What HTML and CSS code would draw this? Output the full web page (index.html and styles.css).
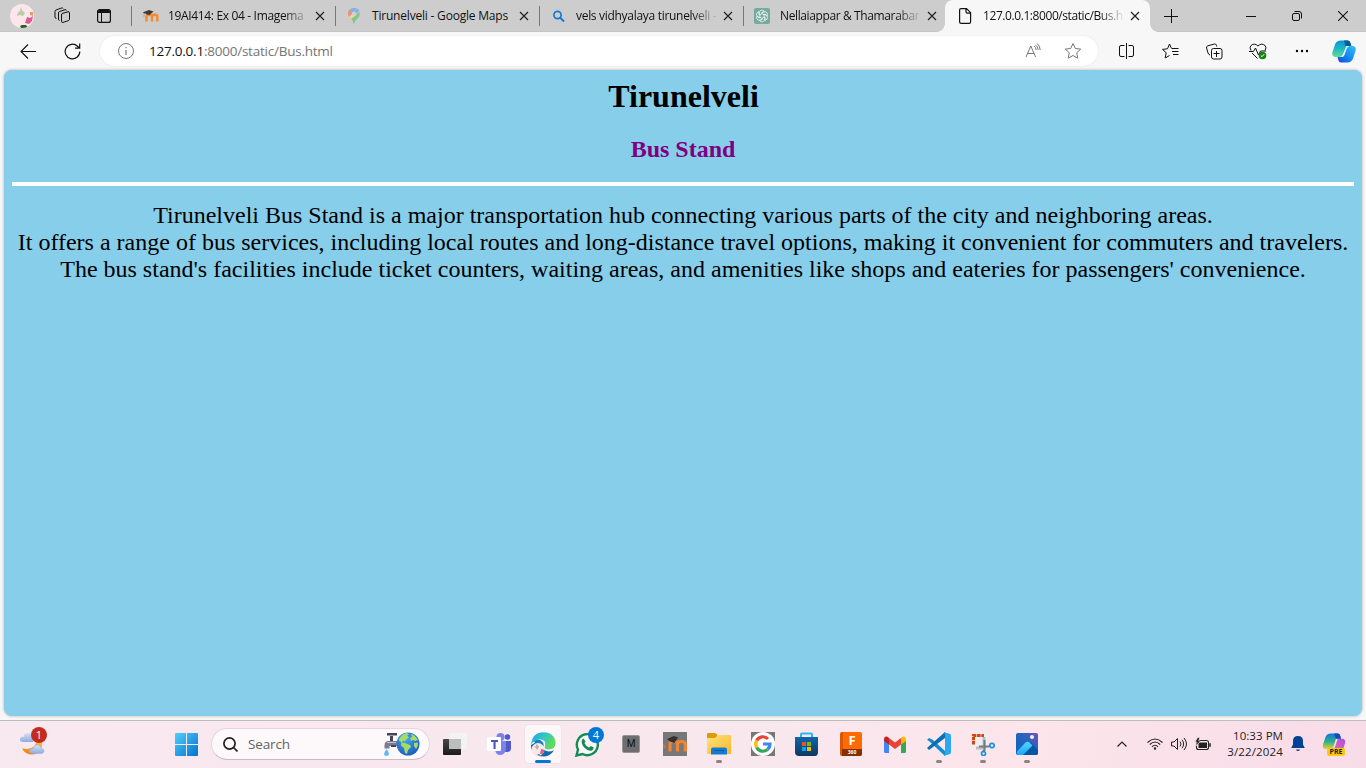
FILE: index.html
```html
<!DOCTYPE html>
<html lang="en">
<head>
<meta charset="utf-8">
<title>Tirunelveli Bus Stand</title>
<link rel="stylesheet" href="styles.css">
</head>
<body>
<svg class="defs" width="0" height="0">
  <defs>
    <symbol id="x" viewBox="0 0 10 10"><path d="M1 1l8 8M9 1L1 9" fill="none" stroke="#222" stroke-width="1.2"/></symbol>
    <linearGradient id="cop1" x1="0" y1="0" x2="0" y2="1"><stop offset="0" stop-color="#0a93d8"/><stop offset=".5" stop-color="#20b8c8"/><stop offset="1" stop-color="#62dc90"/></linearGradient>
    <linearGradient id="cop2" x1="1" y1="0" x2="0" y2="1"><stop offset="0" stop-color="#2fc4f4"/><stop offset=".5" stop-color="#178cf4"/><stop offset="1" stop-color="#1346d8"/></linearGradient>
    <linearGradient id="win" gradientUnits="userSpaceOnUse" x1="0" y1="0" x2="23" y2="23"><stop offset="0" stop-color="#4fd0fb"/><stop offset="1" stop-color="#0470cf"/></linearGradient>
    <linearGradient id="cloud" x1="0" y1="0" x2="0" y2="1"><stop offset="0" stop-color="#d3e1f8"/><stop offset="1" stop-color="#8eabe0"/></linearGradient>
    <linearGradient id="moon" x1="0" y1="1" x2="1" y2="0"><stop offset="0" stop-color="#ec7d16"/><stop offset="1" stop-color="#fbc430"/></linearGradient>
    <linearGradient id="dark" x1="0" y1="0" x2="0" y2="1"><stop offset="0" stop-color="#484848"/><stop offset="1" stop-color="#1b1b1b"/></linearGradient>
    <linearGradient id="edge1" x1="0" y1="0" x2="1" y2=".5"><stop offset="0" stop-color="#239fd8"/><stop offset=".5" stop-color="#2fc5cc"/><stop offset="1" stop-color="#65dc58"/></linearGradient>
    <linearGradient id="folder" x1="0" y1="0" x2="1" y2="1"><stop offset="0" stop-color="#ffe27c"/><stop offset="1" stop-color="#fbb829"/></linearGradient>
    <linearGradient id="photo" x1="0" y1="1" x2="1" y2="0"><stop offset="0" stop-color="#0b63c0"/><stop offset=".6" stop-color="#2964bd"/><stop offset="1" stop-color="#7a4bb8"/></linearGradient>
    <linearGradient id="hill" x1="0" y1="0" x2="0" y2="1"><stop offset="0" stop-color="#4fd8ff"/><stop offset="1" stop-color="#1da7f0"/></linearGradient>
    <linearGradient id="store" x1="0" y1="0" x2="0" y2="1"><stop offset="0" stop-color="#0c67ad"/><stop offset="1" stop-color="#12375f"/></linearGradient>
    <linearGradient id="pre1" x1="0" y1="0" x2="0" y2="1"><stop offset="0" stop-color="#1576d8"/><stop offset=".5" stop-color="#28ae90"/><stop offset="1" stop-color="#e8d52a"/></linearGradient>
    <linearGradient id="pre2" x1="1" y1="0" x2="0" y2="1"><stop offset="0" stop-color="#a34fe8"/><stop offset="1" stop-color="#f6718d"/></linearGradient>
    <radialGradient id="globe" cx=".4" cy=".3" r=".8"><stop offset="0" stop-color="#49a5ef"/><stop offset="1" stop-color="#1555b5"/></radialGradient>
    <clipPath id="round"><circle cx="12" cy="12" r="12"/></clipPath>
    <clipPath id="mini"><circle cx="7" cy="17.500" r="6.500"/></clipPath>
  </defs>
</svg>

<header class="tabstrip">
  <div class="cell profile">
    <svg width="24" height="24" viewBox="0 0 24 24"><g clip-path="url(#round)"><path d="M0 0h24v24H0z" fill="#fbe6ea"/><path d="M11 3l1 3 3 3-2 3-3-1-3 1 1-4 2-1z" fill="#bccab0"/><path d="M17 13l3 1 3-2-1 5-3 3-4-1 1-3z" fill="#dd5c8d"/><path d="M20 8l3 0 0 4-3-1z" fill="#e79a6a"/><path d="M10 22l2-1 4 0 2 3h-7z" fill="#23622b"/></g></svg>
  </div>
  <div class="cell workspaces">
    <svg width="17" height="17" viewBox="0 0 17 17" fill="none" stroke="#111"><path d="M8 6.500l6-1.700q1.500-.3 1.500 1v6.500q0 1-1 1.300l-5.500 1.800q-1.500.3-1.500-1V8q0-1.200.5-1.500z"/><path d="M5.500 13.500q-1 0-1-1.500V6q0-1.200 1-1.500l5.500-1.800q1.300-.2 1.600.8M2.500 11.500Q1 11.500 1 10V4.500Q1 3.300 2 3L7.500 1Q9 .800 9.300 1.500"/></svg>
  </div>
  <div class="cell tabactions">
    <svg width="14" height="14" viewBox="0 0 14 14"><rect x=".6" y=".6" width="12.800" height="12.800" rx="2" fill="none" stroke="#111" stroke-width="1.200"/><path d="M1 2.500Q1 1 2.500 1h9Q13 1 13 2.500V4H1z" fill="#111"/><path d="M4.500 4v9" stroke="#111"/></svg>
  </div>
  <div class="tab">
    <svg width="16" height="16" viewBox="0 0 16 16"><path d="M3.500 13.500V8.600q0-1.800 2.800-1.800t2.700 1.800v4.900m0-4.900q0-1.800 2.800-1.800t2.500 1.800v4.900" fill="none" stroke="#f98a2c" stroke-width="2.400"/><path d="M0 4.300L6 2l4.500 1.500L6.500 7 3.500 6.500 3 5.500l-2 .1z" fill="#3f3b3a"/><path d="M1 5v4" stroke="#a88" stroke-width=".6"/></svg>
    <span class="label l1">19AI414: Ex 04 - Imagema</span><svg class="close"><use href="#x"/></svg>
  </div>
  <div class="tab">
    <svg class="pin" width="16" height="16" viewBox="0 0 16 16"><path d="M2 6Q2 0 8-.1L10 8 8 16Q7.500 12 4.500 10 2 8 2 6z" fill="#83c99b"/><path d="M3.500 2L8 0q4 0 5.500 3L5 9z" fill="#8eaee8"/><path d="M3.500 2L8 6 5 9Q2 8 2 5.500q0-2 1.500-3.500z" fill="#ed8d83"/><path d="M13.700 4Q14.500 8 11 11q-2.500 2-3 5-1-4-3.500-6.500z" fill="#7fc798"/><path d="M3 9l5-5 2.500 3L5 11z" fill="#f8d678"/><circle cx="8" cy="5.600" r="2.200" fill="#d0d0d0"/></svg>
    <span class="label l2">Tirunelveli - Google Maps</span><svg class="close"><use href="#x"/></svg>
  </div>
  <div class="tab">
    <svg width="16" height="16" viewBox="0 0 16 16" fill="none" stroke="#1a79d2"><circle cx="6.500" cy="7" r="3.600" stroke-width="1.700"/><path d="M9 9.500l4 4" stroke-width="2"/></svg>
    <span class="label l3">vels vidhyalaya tirunelveli -</span><svg class="close"><use href="#x"/></svg>
  </div>
  <div class="tab">
    <svg class="gpt" width="16" height="16" viewBox="0 0 16 16"><rect width="16" height="16" rx="2" fill="#75aa9c"/><g fill="none" stroke="#f4faf8" stroke-width=".75"><path id="petal" d="M8 5.600L5.300 7.100V4.300Q6 2.100 8 2.100q1.500 0 2.300 1.200L7.700 4.800"/><use href="#petal" transform="rotate(60 8 8)"/><use href="#petal" transform="rotate(120 8 8)"/><use href="#petal" transform="rotate(180 8 8)"/><use href="#petal" transform="rotate(240 8 8)"/><use href="#petal" transform="rotate(300 8 8)"/></g></svg>
    <span class="label l4">Nellaiappar &amp; Thamarabar</span><svg class="close"><use href="#x"/></svg>
  </div>
  <div class="tab active">
    <svg width="16" height="16" viewBox="0 0 16 16" fill="none" stroke="#111" stroke-width="1.200"><path d="M2 .6h5.500L11.600 4.700v9.100q0 1.600-1.500 1.600H2.100Q.6 15.400.6 13.800V2Q.6.600 2 .6zM7 .6v3.200q0 1.400 1.400 1.400h3.200"/></svg>
    <span class="label l5">127.0.0.1:8000/static/Bus.h</span><svg class="close"><use href="#x"/></svg>
  </div>
  <div class="cell newtab"><svg width="14" height="14" viewBox="0 0 14 14"><path d="M7.500 0v14M0 7.500h14" stroke="#111"/></svg></div>
  <div class="caption">
    <div><svg width="10" height="10"><path d="M0 5.500h10" stroke="#111"/></svg></div>
    <div><svg width="10" height="10" viewBox="0 0 10 10" fill="none" stroke="#111"><rect x=".5" y="2.500" width="7" height="7" rx="1.500"/><path d="M2.500.5H7Q9.500.5 9.500 3v4.500"/></svg></div>
    <div><svg width="10" height="10"><path d="M0 0l10 10M10 0L0 10" stroke="#111" stroke-width="1.100"/></svg></div>
  </div>
</header>

<nav class="toolbar">
  <div class="tool back"><svg width="17" height="15" viewBox="0 0 17 15" fill="none" stroke="#111" stroke-width="1.100"><path d="M16 7.500H1M8 .5l-7 7 7 7"/></svg></div>
  <div class="tool reload"><svg width="17" height="17" viewBox="0 0 17 17" fill="none" stroke="#111" stroke-width="1.200"><path d="M15.800 8.500A7.300 7.300 0 1 1 13.500 3.200L15.500 5M15.700.500V5.200H11"/></svg></div>
  <div class="address">
    <svg width="16" height="16" viewBox="0 0 16 16" fill="none" stroke="#777"><circle cx="8" cy="8" r="7.500"/><path d="M8 7v5M8 4v1.300" stroke-width="1.200"/></svg>
    <span class="url"><b>127.0.0.1</b>:8000/static/Bus.html</span>
    <svg class="read" width="17" height="16" viewBox="0 0 17 16" fill="none" stroke="#777"><path d="M1 14L5.800 3 10.600 14M2.500 10.500h6.600M9 3q2 1.300 2.200 4M10.500 2q2.500 1.500 2.700 5M12 .5q3 2 3.200 6.500"/></svg>
    <svg width="18" height="18" viewBox="0 0 18 18" fill="none" stroke="#777" stroke-linejoin="round"><path d="M9 1.500l2.300 5 5.400.6-4 3.700 1.100 5.400L9 13.500l-4.800 2.700 1.100-5.400-4-3.700 5.400-.6z"/></svg>
  </div>
  <div class="tool split"><svg width="15" height="16" viewBox="0 0 15 16" fill="none" stroke="#111"><path d="M5.500 2.500H2Q.5 2.500.5 4v8q0 1.500 1.500 1.500h3.500M9.500 2.500H13q1.500 0 1.500 1.500v8q0 1.500-1.500 1.500H9.500M7.500 0v16"/></svg></div>
  <div class="tool"><svg width="17" height="16" viewBox="0 0 17 16" fill="none" stroke="#111" stroke-linejoin="round"><path d="M9.500 5.500L7.500 1 5.500 5.800l-5 .6 3.700 3.300-1 5.300L7.500 12.500M10 5.500h6.500M10 8.500h6.500M11 11.500h5.500"/></svg></div>
  <div class="tool"><svg width="17" height="17" viewBox="0 0 17 17" fill="none" stroke="#111"><rect x="5.500" y="5.500" width="10.500" height="10.500" rx="2"/><path d="M10.500 8v6M7.500 10.500h6M4 12q-1.500-.5-2-2L.6 5Q.2 3.300 1.800 2.800L8.500 1q1.500-.3 2 1.300l.3 1.200"/></svg></div>
  <div class="tool"><svg width="18" height="17" viewBox="0 0 18 17" fill="none" stroke="#111"><path d="M2 7.500Q0 4.500 2 2.500 5.500-.5 9 3q3.500-3.500 7-.5 2 2 0 5M3 10l5.500 5.500M0 8.500h4.500L6.500 5l3 7 2-4h5.500"/><circle cx="13.500" cy="12.500" r="3.800" fill="#138313" stroke="none"/><path d="M11.800 12.500l1.200 1.200 2.200-2.500" stroke="#fff"/></svg></div>
  <div class="tool"><svg width="14" height="4"><circle cx="2" cy="2" r="1.200"/><circle cx="7" cy="2" r="1.200"/><circle cx="12" cy="2" r="1.200"/></svg></div>
  <div class="tool copilot"><svg width="24" height="23" viewBox="0 0 24 23"><path d="M9 .5h6.500Q17.800.5 18.500 3l.8 3H14.500L11 14.500q-1 2.500-3 2.500H3Q-.5 16.500.5 12L3.200 4Q4.500.5 9 .5z" fill="url(#cop1)"/><path d="M12 .5h4q2 0 2.500 2.500l.8 3h-6z" fill="#0a5c99"/><path d="M18 6h2.500Q24.800 6.500 23.500 11L21 18.500Q19.500 22.500 15.500 22.500H9Q7 22.500 6.300 20L5.500 17H8.500q2.500 0 3.500-3l2-5.500Q15 6 18 6z" fill="url(#cop2)"/><path d="M14.500 6h3q-2 .2-2.700 2.500L12.500 15q-.8 2-2.500 2H8.500q2-.5 2.800-3z" fill="#eefafd"/></svg></div>
</nav>

<main class="page">
  <h1>Tirunelveli</h1>
  <h2>Bus Stand</h2>
  <hr>
  <p>Tirunelveli Bus Stand is a major transportation hub connecting various parts of the city and neighboring areas.<br>It offers a range of bus services, including local routes and long-distance travel options, making it convenient for commuters and travelers.<br>The bus stand's facilities include ticket counters, waiting areas, and amenities like shops and eateries for passengers' convenience.</p>
</main>

<footer class="taskbar">
  <div class="weather">
    <svg width="26" height="24" viewBox="0 0 26 24"><path d="M2 16.500q8 1.500 12-2l4-6.500h3q2.500 5-.5 9.500-3 5-8.500 5-7 0-10-6z" fill="url(#moon)"/><path d="M3 10q-4-.5-3-3.500Q1 4 3.500 5 4 1 8 1q4 0 4 4 3 1 1 5z" fill="url(#cloud)"/><path d="M12 21.500q-3.500-1-2.500-3.500 1.500-2 3.500-1.500 1-4 5-3.500 3 .5 3.500 3.500 3.500.5 2.300 3.500-1 1.500-2.800 1.500z" fill="url(#cloud)" stroke="#89a5da" stroke-width=".4"/></svg>
    <span class="badge red">1</span>
  </div>
  <div class="start"><svg width="23" height="23" viewBox="0 0 23 23"><path d="M1 0h10v11H0V1Q0 0 1 0zM12 0h10q1 0 1 1v10H12zM0 12h11v11H1q-1 0-1-1zM12 12h11v10q0 1-1 1H12z" fill="url(#win)"/></svg></div>
  <div class="search">
    <svg width="15" height="15" viewBox="0 0 15 15" fill="none" stroke="#222" stroke-width="1.700"><circle cx="6.500" cy="6.500" r="5.600"/><path d="M10.500 10.500l4 4"/></svg>
    <span>Search</span>
    <svg width="37" height="24" viewBox="0 0 37 24"><path d="M1.500 16.500v-3q0-4.500 4-4.500H15v5H6.500v2.500z" fill="#7d7b94"/><path d="M7 9h3V3H7zM4 1h10v2.500H4zM8 13h5v2H8z" fill="#44435c"/><path d="M4 10.500h9" stroke="#c4c3d2"/><path d="M3.500 17Q0 22 1.500 23.200q2 1.300 4 0Q7 21.500 3.500 17z" fill="#62b8ee"/><circle cx="25" cy="12" r="11.500" fill="url(#globe)"/><path d="M15.500 8q3-6 8.500-7l2 1.500-2 1 2 2-3 2-1 2-2-1-1 2 3 .5 5 2 1 2-3 3-1 4-2-1-1-5-3-2.500.5-3zM28 2q4 1 7 6l-3 1-2-1-2 1-1-3 2-1zM31 11l4-.5Q35.500 14 33 17l-2-3z" fill="#a4dd66"/></svg>
  </div>
  <div class="apps">
    <div class="app"><svg width="24" height="24" viewBox="0 0 24 24"><rect x="0" y="7" width="18" height="16" rx="1" fill="url(#dark)"/><rect x="6" y="1" width="18" height="16" rx="1" fill="#f3f3f3"/><path d="M6 7h12v10H6z" fill="#bdbdbd"/></svg></div>
    <div class="app"><svg width="24" height="24" viewBox="0 0 24 24"><circle cx="13.500" cy="5" r="4" fill="#7b83eb"/><circle cx="20.500" cy="5" r="2.800" fill="#5059c9"/><path d="M17 9h7v7q0 4-4 4-3 0-3-2z" fill="#5059c9"/><path d="M8 9h11v8q-1 6-6 6-4 0-5-5z" fill="#7b83eb"/><rect x="0" y="5" width="14" height="14" rx="1" fill="#fff"/><path d="M4 8h7v2H8.600v7H6.500v-7H4z" fill="#4b53bc"/></svg></div>
    <div class="app current"><svg width="25" height="25" viewBox="0 0 25 25"><path d="M0 13Q0 24.500 12.500 24.500q6.500 0 10.500-6-10 3-11-4L9 8z" fill="#1169b0"/><path d="M0 13Q1 .5 12.500.3 24 .8 24.500 11q0 6.500-7.500 6.500-4.500-.5-3-3.500Q15.500 7 8.500 7.500 2 8 0 13z" fill="url(#edge1)"/><path d="M3 9q6-3 9 1.500 1.500 3-.5 4.500L5 13z" fill="#1480c4"/><g clip-path="url(#mini)"><path d="M0 10h14v15H0z" fill="#f9e6ea"/><path d="M10 17l4 1-2 4-3 0z" fill="#d9628b"/><path d="M6 12l2 3-2 3-2-3z" fill="#aeb99e"/><path d="M6 23l2-1 2 2z" fill="#23622b"/></g></svg><i></i></div>
    <div class="app"><svg width="25" height="25" viewBox="0 0 25 25"><path d="M1.500 23.500L3 17.500A10.500 10.500 0 1 1 7.500 22z" fill="#fff" fill-opacity=".6" stroke="#168a55" stroke-width="2.400"/><path d="M8.500 6.500l2 3-1 1.700q1.600 3 4.500 4.300l1.800-1.500 3 1.600q-.5 3-3 3.200-3.500.2-6.300-3Q6 12 6.800 8.500q.4-1.300 1.700-2z" fill="#168a55"/></svg><span class="badge blue">4</span></div>
    <div class="app"><div class="mtile">M</div></div>
    <div class="app"><svg width="24" height="24" viewBox="0 0 24 24"><path d="M0 0h24v24H0z" fill="#777"/><path d="M7 19.500V12q0-2.500 3.800-2.500T14.500 12v7.500m0-7.500q0-2.500 4-2.500t3.800 2.500v7.500" fill="none" stroke="#ee8434" stroke-width="3.200"/><path d="M4 7l7-3 4 1.500L11.500 11 7 9.500z" fill="#35302f"/><path d="M0 12l3 1v4l-3-2z" fill="#b57846"/></svg></div>
    <div class="app running"><svg width="24" height="23" viewBox="0 0 24 23"><path d="M1 0h7l3 2h-1v4H0V1Q0 0 1 0z" fill="#d99c0b"/><path d="M0 5h8l3-3h12q1 0 1 1v18H0z" fill="url(#folder)"/><path d="M4 21.500v-5q0-2 2-2h12q2 0 2 2v5z" fill="#137cce"/><path d="M7 17.500h10" stroke="#075ca6"/></svg><i></i></div>
    <div class="app"><svg width="24" height="24" viewBox="0 0 24 24"><path d="M0 0h24v24H0z" fill="#777"/><circle cx="12" cy="12" r="12" fill="#fff"/><g fill="none" stroke-width="3.200"><path d="M5.700 8.500A7 7 0 0 1 17 7" stroke="#ea4335"/><path d="M5.700 8.500a7 7 0 0 0 0 7" stroke="#fbbc05"/><path d="M5.700 15.500A7 7 0 0 0 16.500 17.500" stroke="#34a853"/><path d="M12 12h7a7 7 0 0 1-2.500 5.500" stroke="#4285f4"/></g></svg></div>
    <div class="app"><svg width="24" height="24" viewBox="0 0 24 24"><path d="M6 6V2.500Q6 1.500 7 1.500h9q1 0 1 1V6" fill="none" stroke="#28b7f5" stroke-width="2"/><path d="M0 5h23v15q0 4-3 4H4q-4 0-4-4z" fill="url(#store)"/><path d="M7 10h4v4H7z" fill="#f25022"/><path d="M12 10h4v4h-4z" fill="#7fba00"/><path d="M7 15h4v4H7z" fill="#00a4ef"/><path d="M12 15h4v4h-4z" fill="#ffb900"/></svg></div>
    <div class="app"><div class="ftile"><b>F</b><small>360</small></div></div>
    <div class="app"><svg width="22" height="17" viewBox="0 0 22 17"><path d="M0 3l5 3.500V17H1.500Q0 17 0 15.500z" fill="#4285f4"/><path d="M17 6.500L22 3v12.500q0 1.500-1.500 1.500H17z" fill="#34a853"/><path d="M17 2l2-1.500Q22 0 22 3v2l-5 3.500z" fill="#fbbc04"/><path d="M5 2l6 4.500L17 2v6.500L11 13 5 8.500z" fill="#ea4335"/><path d="M0 3Q0 0 3 .5L5 2v6.500L0 5z" fill="#c5221f"/></svg></div>
    <div class="app running"><svg width="24" height="24" viewBox="0 0 24 24"><path d="M0 8l2-2 4 2 12 11v5L2 9z" fill="#128bd1"/><path d="M0 16L18 0v6L2 18z" fill="#0870b2"/><path d="M17 0l6 2q1 .5 1 2v16q0 1.500-1 2l-6 2q1-1 1-3V3q0-2-1-3z" fill="#2aa8f4"/></svg><i></i></div>
    <div class="app running"><svg width="24" height="24" viewBox="0 0 24 24"><path d="M0 1h17v16H0z" fill="#f0eeee"/><path d="M2.500 12.500V3.500H13" fill="none" stroke="#d44312" stroke-width="3" stroke-dasharray="3.500 .7"/><path d="M13 5v11H5" stroke="#b9bec3" stroke-width="3" fill="none"/><path d="M13.500 8v10l-2 2M8 14.500h10" stroke="#747b82" stroke-width="2" fill="none"/><circle cx="21" cy="13.500" r="2.200" fill="none" stroke="#1693df" stroke-width="1.700"/><circle cx="12.500" cy="21.500" r="2" fill="none" stroke="#1693df" stroke-width="1.700"/></svg><i></i></div>
    <div class="app running"><svg width="22" height="22" viewBox="0 0 22 22"><rect width="22" height="22" rx="2" fill="url(#photo)"/><path d="M2 21.500L10 14l4-4q1-.5 2 .5l6 7v2.500q0 2-2 2H3z" fill="#0755a5"/><path d="M1 18.500L9.500 9.500q2-1.700 4 0l3 3L7 22H2.500Q.5 22 1 18.500z" fill="url(#hill)"/><circle cx="16" cy="4" r="2" fill="#f4f4ff"/></svg><i></i></div>
  </div>
  <div class="tray">
    <svg class="chev" width="10" height="6"><path d="M.5 5.500l4.500-4.500 4.500 4.500" fill="none" stroke="#222" stroke-width="1.200"/></svg>
    <svg width="16" height="14" viewBox="0 0 16 14" fill="none" stroke="#222" stroke-width="1.100"><path d="M.5 5.500q7.500-7 15 0M2.800 7.500q5.200-5 10.400 0M5 9.800q3-3 6 0"/><circle cx="8" cy="11.500" r="1.200" fill="#222" stroke="none"/></svg>
    <svg class="vol" width="16" height="14" viewBox="0 0 16 14" fill="none" stroke="#222"><path d="M.5 5h2.500L6.500 1.500v11L3 9H.5zM9 4.500q2 2.500 0 5M11 2.800q3.300 4.200 0 8.400M13 1q5 6 0 12"/></svg>
    <svg class="batt" width="16" height="14" viewBox="0 0 16 14"><rect x="1.500" y="3.500" width="12" height="9" rx="2" fill="none" stroke="#222" stroke-width="1.100"/><path d="M3.500 5.500h8.500v5.500H3.500zM14.300 6.300h1.500v3.500h-1.500z" fill="#222"/><path d="M2.700.5L0 5h2L1 9l4.500-5H3.700L4.700.500z" fill="#222" stroke="#f8e3eb" stroke-width=".6"/></svg>
    <div class="clock"><span class="time">10:33 PM</span><span class="date">3/22/2024</span></div>
    <svg class="bell" width="14" height="16" viewBox="0 0 14 16"><path d="M7 0q5 0 5 5v3.500l1.800 3.500H.2L2 8.500V5q0-5 5-5zM5 13.500h4q-.5 1.500-2 1.500t-2-1.500z" fill="#064293"/></svg>
    <div class="precopilot"><svg width="24" height="22" viewBox="0 0 24 23"><path d="M9 .5h6.500Q17.800.5 18.500 3l.8 3H14L11.500 14q-1 3-3 3H3Q-.5 16.500.5 12L3.200 4Q4.500.5 9 .5z" fill="url(#pre1)"/><path d="M12 .5h4q2 0 2.500 2.500l.8 3H14z" fill="#1549b8"/><path d="M16 6h4.500Q24.800 6.500 23.500 11L21 18.500H7L11 17q1.500-.5 2.200-3z" fill="url(#pre2)"/></svg><span>PRE</span></div>
  </div>
</footer>
</body>
</html>
```
FILE: styles.css
```css
* { box-sizing: border-box; }
body {
  margin: 0;
  width: 1366px;
  height: 768px;
  overflow: hidden;
  display: flex;
  flex-direction: column;
  background: #f7f7f7;
  font-family: "Open Sans", "Noto Sans", sans-serif;
}
svg { display: block; flex: none; }
.defs { position: absolute; }

.tabstrip { display: flex; height: 32px; flex: none; background: #cdcdcd; border-bottom: 1px solid #c6c6c6; }
.cell { display: flex; align-items: center; justify-content: center; }
.profile { width: 44px; }
.workspaces { width: 36px; }
.tabactions { width: 48px; margin-right: 3px; }
.tab {
  display: flex;
  align-items: center;
  width: 204px;
  flex: none;
  padding-left: 11px;
  border-left: 1px solid transparent;
  background: linear-gradient(#777, #777) -1px 6px / 1px 20px no-repeat;
  background-origin: padding-box;
  background-clip: border-box;
}
.label {
  width: 140px;
  margin: 0 7px 0 9px;
  white-space: nowrap;
  font-size: 12px;
  line-height: 18px;
  color: #111;
  mask-image: linear-gradient(90deg, #000 116px, transparent 142px);
}
.l1 { letter-spacing: -.34px; }
.l2 { letter-spacing: -.2px; mask-image: none; }
.l3 { letter-spacing: -.3px; }
.l4 { letter-spacing: -.38px; }
.l5 { letter-spacing: -.42px; }
.pin, .gpt { margin-left: -1px; margin-right: 1px; }
.close { width: 10px; height: 10px; }
.active {
  position: relative;
  height: 32px;
  margin-left: -2px;
  padding-left: 13px;
  width: 205px;
  background: #f7f7f7;
  border-radius: 8px 8px 0 0;
}
.active .label { margin-left: 8px; }
.active::before, .active::after { content: ""; position: absolute; bottom: 0; width: 8px; height: 8px; }
.active::before { left: -9px; background: radial-gradient(circle at 0 0, transparent 7.5px, #f7f7f7 8px); }
.active::after { right: -8px; background: radial-gradient(circle at 100% 0, transparent 7.5px, #f7f7f7 8px); }
.newtab { width: 42px; }
.caption { display: flex; margin-left: auto; }
.caption div { width: 46px; display: flex; align-items: center; justify-content: center; }

.toolbar { display: flex; align-items: center; height: 38px; flex: none; background: #f7f7f7; }
.tool { width: 44px; display: flex; justify-content: center; }
.back { margin-left: 6px; }
.address {
  width: 998px;
  height: 30px;
  margin: 0 6px;
  padding: 0 16px 0 18px;
  display: flex;
  align-items: center;
  background: #fff;
  border-radius: 15px;
  box-shadow: 0 0 2px #e2e2e2;
}
.url { margin-left: 15px; font-size: 13.5px; letter-spacing: -.23px; color: #757575; }
.url b { font-weight: 400; color: #111; }
.read { margin: 0 22px 0 auto; }
.copilot { width: 40px; }

.page {
  width: 1358px;
  height: 646px;
  flex: none;
  margin: 0 4px;
  padding: 8px;
  background: skyblue;
  border-radius: 8px;
  box-shadow: 0 0 3px #aaa;
  font-family: "Liberation Serif", "Times New Roman", serif;
  text-align: center;
  color: #000;
}
.page h1 { margin: 0; padding-left: 1px; font-size: 32px; line-height: 37px; }
.page h2 { margin: 21px 0 19px; font-size: 24px; line-height: 27px; color: purple; }
.page hr { height: 4px; margin: 0; border: 0; background: #fff; }
.page p { margin: 16px 0 0; font-size: 24px; line-height: 27px; white-space: nowrap; }

.taskbar {
  display: flex;
  align-items: center;
  height: 48px;
  flex: none;
  margin-top: 4px;
  padding-bottom: 1px;
  border-top: 1px solid #bdbdbd;
  background: linear-gradient(100deg, #f8e8ef, #f8e8ee 55%, #fce5eb 75%, #f8dce8);
}
.weather { position: relative; width: 26px; margin-left: 20px; }
.badge {
  position: absolute;
  width: 16px;
  height: 16px;
  border-radius: 50%;
  color: #fff;
  font-size: 11px;
  line-height: 16px;
  text-align: center;
}
.red { background: #c42b1c; left: 11px; top: -5px; }
.blue { background: #0078d4; left: 23px; top: 3px; }
.start { width: 36px; margin-left: 129px; }
.search {
  width: 219px;
  height: 32px;
  display: flex;
  align-items: center;
  padding: 0 9px 0 11px;
  background: #fdf8fa;
  border: 1px solid #e5d6dd;
  border-bottom-color: #cbbcc3;
  border-radius: 16px;
}
.search span { margin: 0 auto 0 10px; font-size: 13.500px; letter-spacing: -.15px; color: #626262; }
.apps { display: flex; margin-left: 3px; }
.app { position: relative; width: 44px; height: 40px; display: flex; align-items: center; justify-content: center; }
.current::before { content: ""; position: absolute; inset: 0 3px; background: #fdf7fa; border: 1px solid #f0e1e8; border-radius: 4px; }
.current svg { position: relative; }
.app i { position: absolute; bottom: 1px; left: 19px; width: 6px; height: 3px; border-radius: 2px; background: #8c8388; }
.current i { left: 14px; width: 16px; background: #0078d4; }
.mtile { width: 18px; height: 18px; border: 1px solid #969696; border-radius: 2px; background: #6e6e6e; color: #111; font: 400 10px/16px Roboto, sans-serif; text-align: center; }
.ftile { width: 22px; height: 24px; display: flex; flex-direction: column; border-radius: 2px; overflow: hidden; background: linear-gradient(90deg, #d95608 3px, #ff6b00 3px); color: #fff; text-align: center; }
.ftile b { padding-left: 2px; font-size: 13px; line-height: 17px; }
.ftile small { height: 7px; margin-left: 2px; background: #853000; font-size: 5px; font-weight: 700; line-height: 7px; }
.tray { display: flex; align-items: center; margin-left: auto; padding-right: 20px; }
.chev { margin-right: 20px; }
.vol { margin: 0 8px; }
.clock { width: 72px; display: flex; flex-direction: column; text-align: right; font-size: 11.5px; line-height: 16px; color: #222; }
.time { letter-spacing: .05px; }
.date { letter-spacing: .15px; }
.bell { margin: 0 17px 0 8px; }
.precopilot { position: relative; }
.precopilot span { position: absolute; left: 5px; top: 15px; width: 18px; height: 8px; border-radius: 2px; background: #ffc80a; color: #222; font-size: 7px; font-weight: 700; line-height: 8px; text-align: center; }
```
